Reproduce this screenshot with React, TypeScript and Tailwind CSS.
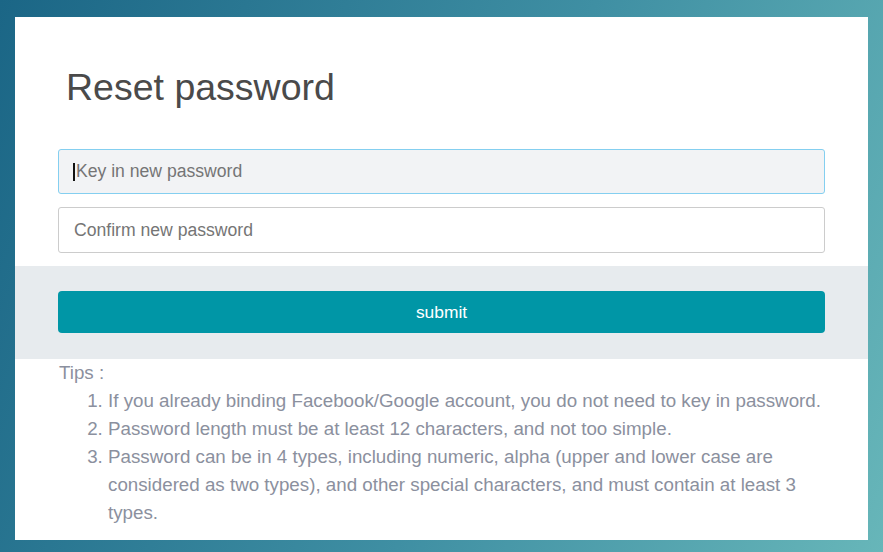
import React from "react";

export default function App() {
  const font = { fontFamily: '"Liberation Sans", Arial, sans-serif' };
  return (
    <div
      className="w-[883px] h-[552px] pt-[17px] pl-[15px] bg-[linear-gradient(110deg,#1b6686_0%,#3f8fa3_55%,#67b6b9_100%)]"
      style={font}
    >
      <div className="w-[853px] h-[523px] bg-white flex flex-col">
        <div className="h-[132px] pt-[52px] pl-[51px] text-[37.5px] leading-[36px] text-[#4a4a4a]">
          Reset password
        </div>
        <div className="px-[43px] flex flex-col gap-[13px]">
          <div className="h-[45px] rounded-[3px] border border-[#84cff0] bg-[#f2f3f5] flex items-center pl-[14px] text-[17.6px] text-[#757575]">
            <span className="inline-block w-[2px] h-[18px] bg-[#111] mr-[1px]" />
            Key in new password
          </div>
          <div className="h-[46px] rounded-[3px] border border-[#cccccc] bg-white flex items-center pl-[15px] text-[17.6px] text-[#757575]">
            Confirm new password
          </div>
        </div>
        <div className="mt-[13px] bg-[#e7ebee] px-[43px] pt-[25px] pb-[26px]">
          <div className="h-[42px] rounded-[4px] bg-[#0096a6] flex items-center justify-center text-white text-[17.4px]">
            submit
          </div>
        </div>
        <div className="pl-[44px] pr-[40px] text-[18.75px] leading-[28px] text-[#8b909e]">
          <div>Tips :</div>
          <ol className="list-decimal pl-[49px]">
            <li>If you already binding Facebook/Google account, you do not need to key in password.</li>
            <li>Password length must be at least 12 characters, and not too simple.</li>
            <li>
              Password can be in 4 types, including numeric, alpha (upper and lower case are considered as two types), and other special characters, and must contain at least 3 types.
            </li>
          </ol>
        </div>
      </div>
    </div>
  );
}
